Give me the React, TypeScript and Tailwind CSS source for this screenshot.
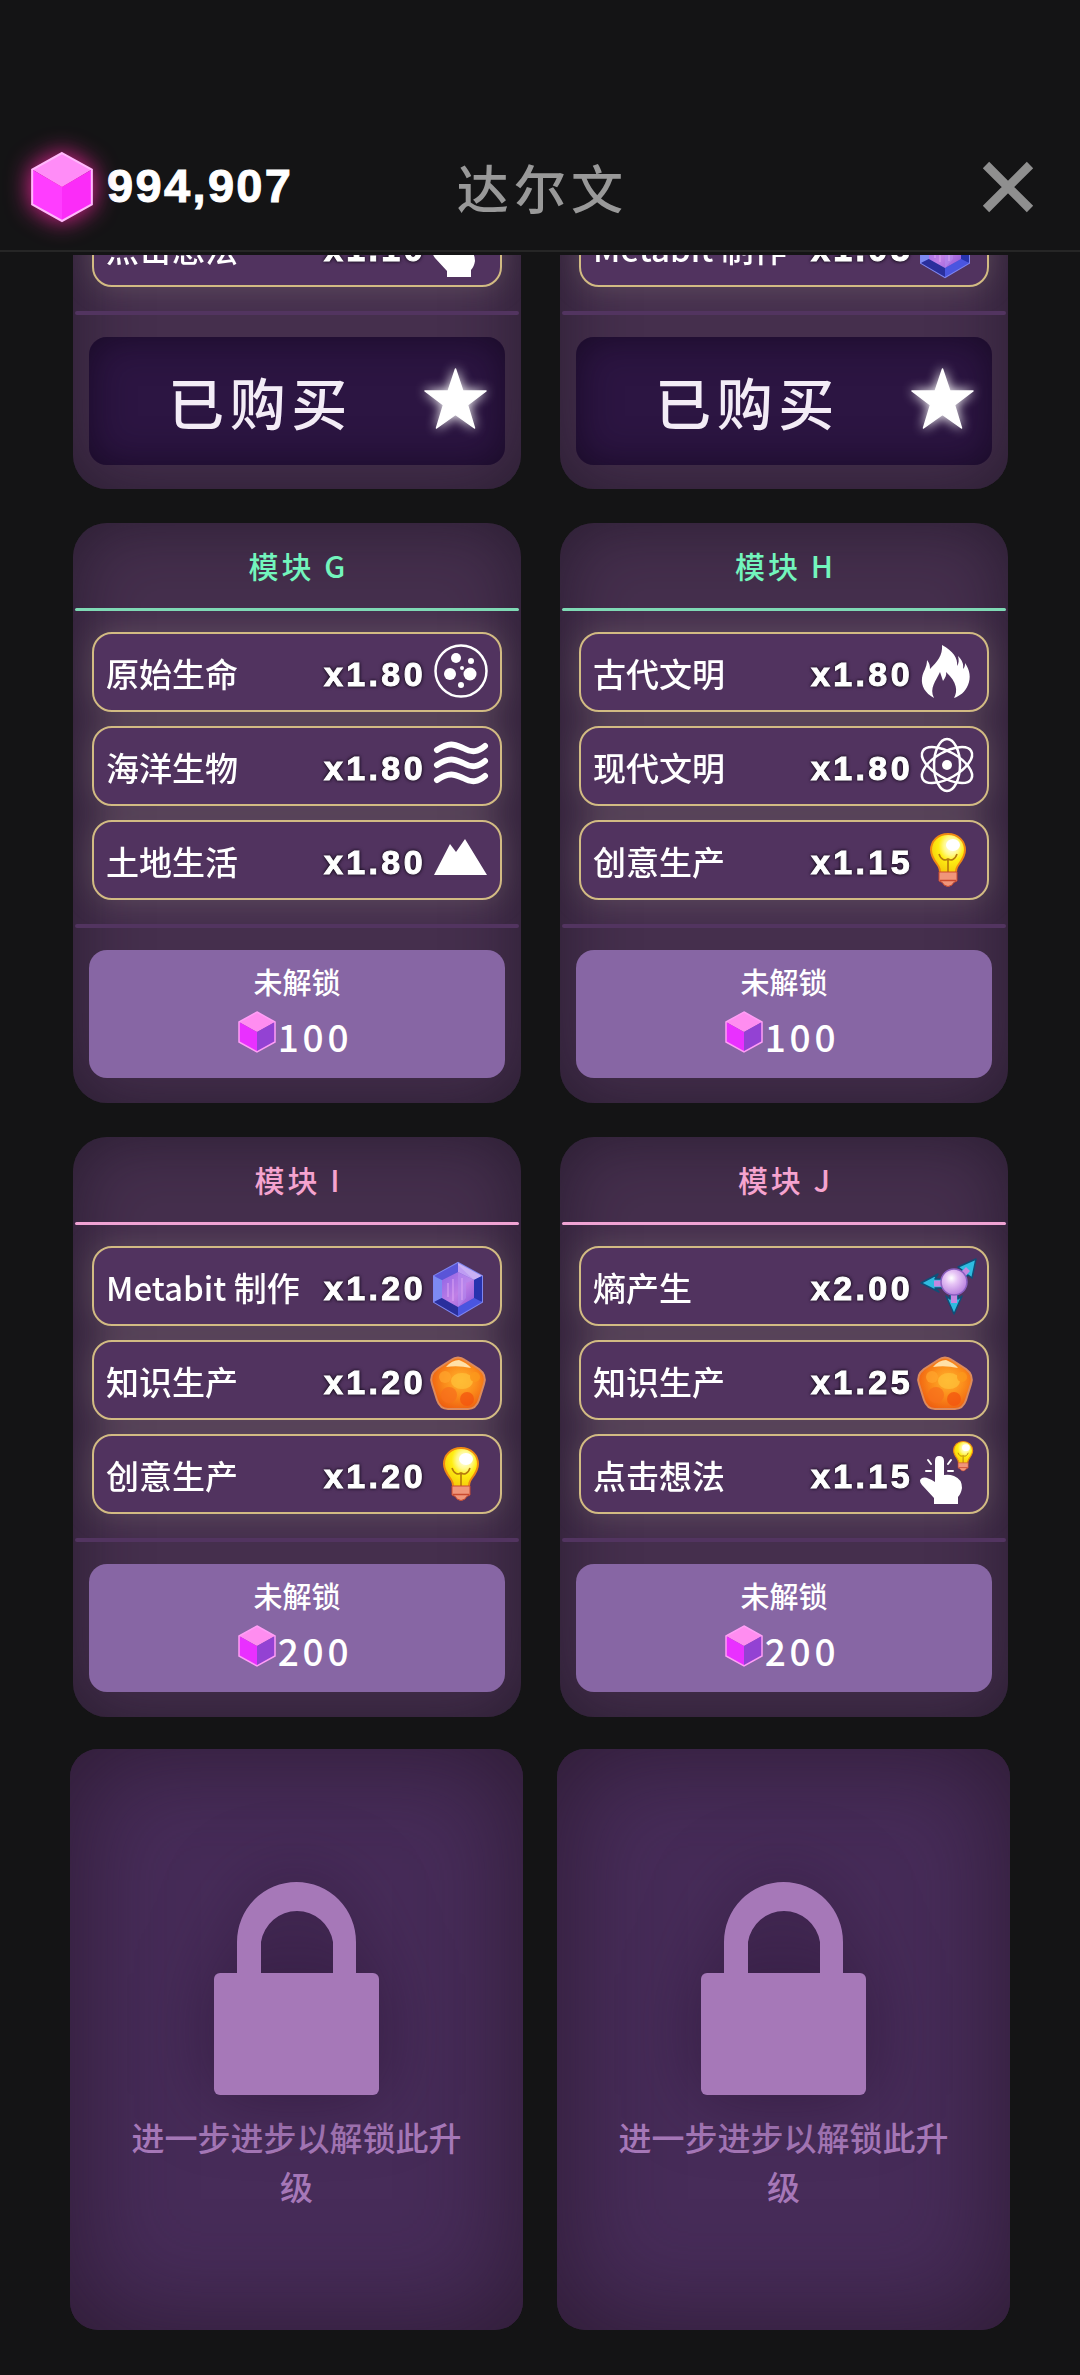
import React from "react";

type IconName =
  | "cell"
  | "waves"
  | "mountain"
  | "fire"
  | "atom"
  | "bulb"
  | "metabit"
  | "knowledge"
  | "entropy"
  | "click";

type Bonus = { label: string; value: string; icon: IconName };

type Module = {
  name: string;
  tone: "green" | "pink";
  cost: number;
  bonuses: Bonus[];
};

const purchased: Bonus[] = [
  { label: "点击想法", value: "x1.10", icon: "click" },
  { label: "Metabit 制作", value: "x1.05", icon: "metabit" },
];

const modules: Module[] = [
  {
    name: "模块 G",
    tone: "green",
    cost: 100,
    bonuses: [
      { label: "原始生命", value: "x1.80", icon: "cell" },
      { label: "海洋生物", value: "x1.80", icon: "waves" },
      { label: "土地生活", value: "x1.80", icon: "mountain" },
    ],
  },
  {
    name: "模块 H",
    tone: "green",
    cost: 100,
    bonuses: [
      { label: "古代文明", value: "x1.80", icon: "fire" },
      { label: "现代文明", value: "x1.80", icon: "atom" },
      { label: "创意生产", value: "x1.15", icon: "bulb" },
    ],
  },
  {
    name: "模块 I",
    tone: "pink",
    cost: 200,
    bonuses: [
      { label: "Metabit 制作", value: "x1.20", icon: "metabit" },
      { label: "知识生产", value: "x1.20", icon: "knowledge" },
      { label: "创意生产", value: "x1.20", icon: "bulb" },
    ],
  },
  {
    name: "模块 J",
    tone: "pink",
    cost: 200,
    bonuses: [
      { label: "熵产生", value: "x2.00", icon: "entropy" },
      { label: "知识生产", value: "x1.25", icon: "knowledge" },
      { label: "点击想法", value: "x1.15", icon: "click" },
    ],
  },
];

const tones = {
  green: { text: "text-[#73f5bd]", line: "bg-[#7fd9b5]" },
  pink: { text: "text-[#f5a3cf]", line: "bg-[#f0a3d4]" },
};

function Defs() {
  return (
    <svg className="absolute h-0 w-0" aria-hidden="true">
      <defs>
        <radialGradient id="bulbGlass" cx="0.6" cy="0.3" r="0.75">
          <stop offset="0" stopColor="#ffffff" />
          <stop offset="0.3" stopColor="#fff98a" />
          <stop offset="0.5" stopColor="#ffee12" />
          <stop offset="1" stopColor="#f2c40a" />
        </radialGradient>
        <linearGradient id="gemCore" x1="0" y1="0" x2="1" y2="1">
          <stop offset="0" stopColor="#8d63e6" />
          <stop offset="0.55" stopColor="#c07fe6" />
          <stop offset="1" stopColor="#8d58d8" />
        </linearGradient>
        <radialGradient id="amber" cx="0.55" cy="0.45" r="0.6">
          <stop offset="0" stopColor="#ffb52e" />
          <stop offset="0.5" stopColor="#fb8d1b" />
          <stop offset="1" stopColor="#ee5d10" />
        </radialGradient>
        <radialGradient id="orb" cx="0.4" cy="0.35" r="0.7">
          <stop offset="0" stopColor="#ffffff" />
          <stop offset="0.35" stopColor="#e6c3f5" />
          <stop offset="1" stopColor="#b47adb" />
        </radialGradient>
      </defs>
    </svg>
  );
}

function Cube({ glow = false }: { glow?: boolean }) {
  if (glow) {
    return (
      <svg
        viewBox="0 0 60 68"
        className="h-[70px] w-[62px] overflow-visible drop-shadow-[0_0_12px_#f0259c]"
        aria-hidden="true"
      >
        <path d="M30 1 59 17 30 34 1 17Z" fill="#ff8cf7" />
        <path d="M1 17 30 34V67L1 51Z" fill="#ff3dff" />
        <path d="M59 17 30 34V67L59 51Z" fill="#fb2cf8" />
        <path d="M30 1 59 17V51L30 67 1 51V17Z" fill="none" stroke="#ffb8fb" strokeWidth="2" />
      </svg>
    );
  }
  return (
    <svg viewBox="0 0 38 42" className="h-[42px] w-[38px]" aria-hidden="true">
      <path d="M19 1 37 11 19 21 1 11Z" fill="#ff8df0" />
      <path d="M1 11 19 21V41L1 31Z" fill="#e930ff" />
      <path d="M37 11 19 21V41L37 31Z" fill="#9342d3" />
      <path d="M19 1 37 11V31L19 41 1 31V11Z" fill="none" stroke="#ff9df6" strokeWidth="1.5" />
    </svg>
  );
}

function StarIcon() {
  return (
    <svg
      viewBox="0 0 63 61"
      className="mb-1.5 h-[61px] w-[63px] overflow-visible drop-shadow-[0_0_6px_#fff]"
      fill="#fff"
      aria-hidden="true"
    >
      <path
        d="M31.500 1 38.800 23H62L43.500 37 50.500 60 31.500 46.500 12.500 60 19.500 37 1 23H24.200Z"
        stroke="#fff"
        strokeWidth="1.5"
        strokeLinejoin="round"
      />
    </svg>
  );
}

function BulbShape() {
  return (
    <>
      <path
        d="M27 1C17 1 10 8 10 17C10 23 13 27 16 31C19 35 19 37 19 41H35C35 37 35 35 38 31C41 27 44 23 44 17C44 8 37 1 27 1Z"
        fill="url(#bulbGlass)"
        stroke="#f08a12"
        strokeWidth="2"
      />
      <path d="M18 21C20 27 24 28 27 26C30 28 34 27 36 21M27 27V40" fill="none" stroke="#b5790c" strokeWidth="1.6" />
      <ellipse cx="32" cy="12" rx="7" ry="6" fill="#fff" />
      <path d="M18 39H36V48Q32 49 31 52Q27 55 23 52Q22 49 18 48Z" fill="#f0957a" stroke="#c94a30" strokeWidth="1" />
      <path d="M19 47.500H35" stroke="#c94a30" strokeWidth="1.5" />
    </>
  );
}

function BonusIcon({ name }: { name: IconName }) {
  const common = { viewBox: "0 0 54 54", className: "h-[54px] w-[54px] shrink-0 overflow-visible", "aria-hidden": true };
  switch (name) {
    case "cell":
      return (
        <svg {...common} fill="#fff">
          <circle cx="27" cy="26" r="25.5" fill="none" stroke="#fff" strokeWidth="2.5" />
          <circle cx="22" cy="13" r="5" />
          <circle cx="37" cy="16" r="3" />
          <circle cx="28" cy="23" r="2" />
          <circle cx="16" cy="29" r="6" />
          <circle cx="36" cy="29" r="6.5" />
          <circle cx="27" cy="40" r="3" />
        </svg>
      );
    case "waves":
      return (
        <svg {...common} fill="none" stroke="#fff" strokeWidth="6" strokeLinecap="round">
          <path d="M3 11C16 2 22 6 29 9C38 14 44 13 51 7" />
          <path d="M3 26C16 17 22 21 29 24C38 29 44 28 51 22" />
          <path d="M3 41C16 32 22 36 29 39C38 44 44 43 51 37" />
        </svg>
      );
    case "mountain":
      return (
        <svg {...common} fill="#fff">
          <path d="M0 42 16 11 22 19 31 6 53 42Z" />
        </svg>
      );
    case "fire":
      return (
        <svg {...common} fill="#fff">
          <path d="M21 0C32 6 37 13 36 21C38 18 38 15 37 11C41 15 43 19 42 24C44 22 44 20 44 18C49 25 50 33 47 40C44 47 39 51 33 53C37 46 36 37 25 27C26 30 24 33 22 36C21 33 20 30 19 27C15 36 8 43 13 53C4 48 0 41 1 33C2 26 6 23 6 15C9 19 9 22 9 24C16 17 22 10 21 0Z" />
        </svg>
      );
    case "atom":
      return (
        <svg {...common} fill="none" stroke="#fff" strokeWidth="2.5">
          <ellipse cx="26" cy="26" rx="13" ry="26" />
          <ellipse cx="26" cy="26" rx="13" ry="28" transform="rotate(60 26 26)" />
          <ellipse cx="26" cy="26" rx="13" ry="28" transform="rotate(-60 26 26)" />
          <circle cx="26" cy="26" r="5" fill="#fff" stroke="none" />
        </svg>
      );
    case "bulb":
      return (
        <svg {...common}>
          <BulbShape />
        </svg>
      );
    case "metabit":
      return (
        <svg {...common}>
          <path d="M24 4 48 17V43L24 57 0 43V17Z" fill="#3a43c4" stroke="#7f86f0" strokeWidth="2" />
          <path d="M24 4 48 17 40 21 24 13Z" fill="#c9b0f5" />
          <path d="M24 4 0 17 8 21 24 13Z" fill="#5a55d8" />
          <path d="M0 17 8 21V39L0 43Z" fill="#7d8af2" />
          <path d="M48 17 40 21V39L48 43Z" fill="#2733ae" />
          <path d="M0 43 8 39 24 48V57Z" fill="#2a2f9c" />
          <path d="M48 43 40 39 24 48V57Z" fill="#4a55e0" />
          <path d="M24 13 40 21V39L24 48 8 39V21Z" fill="url(#gemCore)" />
          <path d="M24 6 40 21 32 24V39L24 48Z" fill="#b48cf0" opacity="0.55" />
          <path d="M14 24V38M19 20V42M28 19V41" stroke="#e0abf5" strokeWidth="1.5" opacity="0.6" />
        </svg>
      );
    case "knowledge":
      return (
        <svg {...common}>
          <path
            d="M17 7Q24 2 31 7L45 16Q53 22 50 31L45 47Q42 56 34 56H14Q6 56 3 47L-2 31Q-5 22 3 16Z"
            fill="url(#amber)"
            stroke="#dd8b5c"
            strokeWidth="2"
          />
          <path d="M12 14Q18 7 25 7Q33 10 37 15Q24 12 12 14Z" fill="#ffe0a8" />
          <g opacity="0.75">
            <circle cx="11" cy="24" r="6" fill="#ffa52c" />
            <ellipse cx="28" cy="28" rx="11" ry="8" fill="#ffc038" />
            <circle cx="41" cy="24" r="5" fill="#fc9a1c" />
            <circle cx="15" cy="42" r="8" fill="#f8701c" />
            <circle cx="33" cy="46" r="7" fill="#f4550f" />
          </g>
        </svg>
      );
    case "entropy":
      return (
        <svg {...common}>
          <g stroke="#0f4f78" strokeWidth="1.5" strokeLinejoin="round">
            <path d="M0 24 17 15 14 20H24V29H14L18 33Z" fill="#2fbbe0" />
            <path d="M55 0 51 19 47 16 38 25 32 18 41 11 37 8Z" fill="#2fbbe0" />
            <path d="M33 55 25 37 29 40V30H37V40L41 37Z" fill="#2fbbe0" />
            <path d="M13 21.500H28V27.500H13ZM30 30H36V44H30ZM35 18 45 8 49 12 39 23Z" fill="#c487e0" stroke="none" />
            <circle cx="33" cy="23" r="13" fill="url(#orb)" stroke="#8a5fc0" />
          </g>
        </svg>
      );
    case "click":
      return (
        <svg {...common}>
          <g fill="#fff">
            <path d="M14 14Q14 9 18 9Q23 9 23 14V28Q28 27 33 29Q41 32 41 41Q40 47 37 50V57H13V51L1 38Q-3 33 1 31Q5 29 14 35Z" />
            <path
              d="M10 17 7 13M10 24H5M27 17 30 13M27 24H32"
              stroke="#fff"
              strokeWidth="2"
              strokeLinecap="round"
            />
          </g>
          <g transform="translate(27 -6) scale(0.56)">
            <BulbShape />
          </g>
        </svg>
      );
  }
}

function BonusRow({ label, value, icon }: Bonus) {
  return (
    <li className="flex h-20 items-center rounded-[20px] border-2 border-[#d2bb83] bg-[#51335f] px-3">
      <span className="flex-1 pt-1 text-[33px] font-medium whitespace-nowrap">{label}</span>
      <span className="pt-1 font-[Liberation_Sans,Arial,sans-serif] text-[34px] font-bold tracking-widest [-webkit-text-stroke:1px_white] [text-shadow:0_0_3px_#1a1020,0_0_3px_#1a1020,0_0_4px_#1a1020]">
        {value}
      </span>
      <span className="ml-2">
        <BonusIcon name={icon} />
      </span>
    </li>
  );
}

function CardBody({ bonuses }: { bonuses: Bonus[] }) {
  return (
    <div className="overflow-hidden px-[19px] pt-[21px] pb-6">
      <ul className="flex flex-col gap-[14px] drop-shadow-[0_0_15px_rgba(240,230,190,0.17)]">
        {bonuses.map((bonus) => (
          <BonusRow key={bonus.label} {...bonus} />
        ))}
      </ul>
    </div>
  );
}

const cardStyle =
  "overflow-hidden rounded-[34px] bg-[#452f4d] shadow-[inset_0_0_70px_rgba(24,16,30,0.6)]";

function PurchasedCard({ bonus }: { bonus: Bonus }) {
  return (
    <article className={cardStyle + " pt-16"}>
      <CardBody bonuses={[bonus]} />
      <div className="mx-[2px] h-1 rounded-full bg-[#523460]" />
      <div className="px-4 pt-[22px] pb-6">
        <button
          disabled
          className="flex h-32 w-full items-center rounded-[18px] bg-[#2c1542] pr-[18px] pl-4 shadow-[inset_0_0_40px_rgba(16,6,26,0.7)]"
        >
          <span className="flex-1 pr-2 text-center text-[56px] leading-none font-medium tracking-widest text-[#f3ecf6]">
            已购买
          </span>
          <StarIcon />
        </button>
      </div>
    </article>
  );
}

function ModuleCard({ name, tone, cost, bonuses }: Module) {
  return (
    <article className={cardStyle}>
      <h2
        className={`flex h-[85px] items-center justify-center pl-[3px] text-[30px] font-medium tracking-widest ${tones[tone].text}`}
      >
        {name}
      </h2>
      <div className={`mx-[2px] h-[3px] rounded-full ${tones[tone].line}`} />
      <CardBody bonuses={bonuses} />
      <div className="mx-[2px] h-1 rounded-full bg-[#523460]" />
      <div className="px-4 pt-[22px] pb-[25px]">
        <button className="flex h-32 w-full flex-col items-center justify-center rounded-[18px] bg-[#8766a4] pb-1">
          <span className="text-[29px] leading-10 font-medium">未解锁</span>
          <span className="flex items-center gap-0.5 pr-1 text-[37px] leading-[54px] font-medium tracking-widest">
            <Cube />
            <span className="pt-2">{cost}</span>
          </span>
        </button>
      </div>
    </article>
  );
}

function LockedCard() {
  return (
    <article className="flex h-[581px] flex-col items-center rounded-[28px] bg-[#472c59] px-12 pt-[133px] text-[#a678b8] shadow-[inset_0_0_110px_rgba(36,22,38,0.75)]">
      <svg
        viewBox="0 0 165 213"
        className="h-[213px] w-[165px] overflow-visible drop-shadow-[0_0_36px_rgba(40,18,50,0.6)]"
        fill="currentColor"
        aria-hidden="true"
      >
        <path d="M23 95V60A59.500 60 0 0 1 142 60V95H119V60A36.500 37 0 0 0 47 60V95Z" />
        <rect y="91" width="165" height="122" rx="6" />
      </svg>
      <p className="mt-[18px] text-center text-[33px] leading-[49px] font-medium">进一步进步以解锁此升级</p>
    </article>
  );
}

export default function App() {
  return (
    <div className="min-h-screen bg-[#141415] pb-[45px] font-[Noto_Sans_CJK_SC,sans-serif] text-white">
      <Defs />
      <header className="grid h-[252px] grid-cols-3 items-center border-b-2 border-[#262626] pt-[123px] pr-[46px] pl-[31px]">
        <div className="flex items-center gap-3.5">
          <Cube glow />
          <span className="font-[Liberation_Sans,Arial,sans-serif] text-[47px] font-bold tracking-wider [-webkit-text-stroke:1px_white]">
            994,907
          </span>
        </div>
        <h1 className="pl-5 text-center text-[52px] font-medium tracking-widest text-[#999]">达尔文</h1>
        <button className="justify-self-end" aria-label="关闭">
          <svg viewBox="0 0 52 52" className="h-[52px] w-[52px]" stroke="#8f8f8f" strokeWidth="9" aria-hidden="true">
            <path d="M4 4 48 48M48 4 4 48" />
          </svg>
        </button>
      </header>
      <main className="mt-[3px] overflow-hidden">
        <div className="-mt-[133px] grid grid-cols-2 gap-x-[39px] gap-y-[34px] pr-[72px] pl-[73px]">
          {purchased.map((bonus) => (
            <PurchasedCard key={bonus.label} bonus={bonus} />
          ))}
          {modules.map((module) => (
            <ModuleCard key={module.name} {...module} />
          ))}
        </div>
        <div className="mt-8 grid grid-cols-2 gap-x-[34px] px-[70px]">
          <LockedCard />
          <LockedCard />
        </div>
      </main>
    </div>
  );
}
